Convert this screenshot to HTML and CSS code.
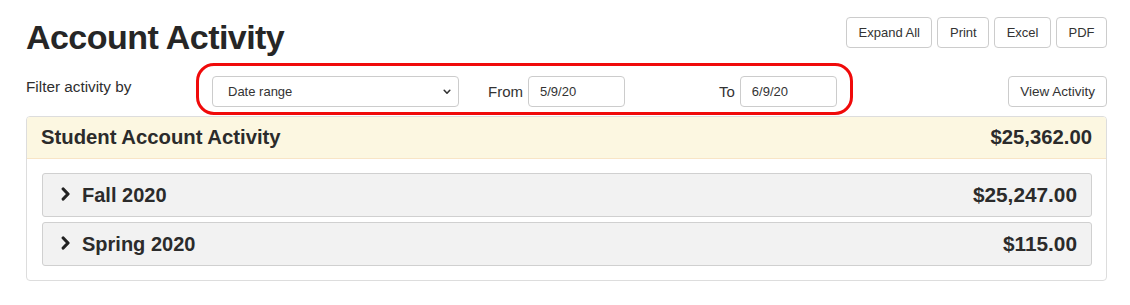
FILE: index.html
```html
<!DOCTYPE html>
<html>
<head>
<meta charset="utf-8">
<link rel="stylesheet" href="styles.css">
</head>
<body>
<div class="page">
  <div class="top">
    <h1 class="title">Account Activity</h1>
    <div class="actions">
      <button class="btn">Expand All</button>
      <button class="btn">Print</button>
      <button class="btn">Excel</button>
      <button class="btn">PDF</button>
    </div>
  </div>
  <div class="filter">
    <div class="filter-label">Filter activity by</div>
    <div class="highlight">
      <div class="select">
        <span>Date range</span>
        <svg width="8" height="6" viewBox="0 0 8 6"><path d="M1.2 1.3 L4 4.2 L6.8 1.3" fill="none" stroke="#333" stroke-width="1.6" stroke-linecap="round" stroke-linejoin="round"/></svg>
      </div>
      <label class="lbl lbl-from">From</label>
      <div class="input">5/9/20</div>
      <label class="lbl lbl-to">To</label>
      <div class="input">6/9/20</div>
    </div>
    <button class="btn btn-view">View Activity</button>
  </div>
  <div class="panel">
    <div class="panel-head">
      <span>Student Account Activity</span>
      <span>$25,362.00</span>
    </div>
    <div class="panel-body">
      <div class="term">
        <div class="term-name">
          <svg class="chev" width="10" height="14" viewBox="0 0 10 14"><path d="M2.2 2 L7 7 L2.2 12" fill="none" stroke="#222" stroke-width="3.2" stroke-linecap="round" stroke-linejoin="round"/></svg>
          <span>Fall 2020</span>
        </div>
        <span class="term-amt">$25,247.00</span>
      </div>
      <div class="term">
        <div class="term-name">
          <svg class="chev" width="10" height="14" viewBox="0 0 10 14"><path d="M2.2 2 L7 7 L2.2 12" fill="none" stroke="#222" stroke-width="3.2" stroke-linecap="round" stroke-linejoin="round"/></svg>
          <span>Spring 2020</span>
        </div>
        <span class="term-amt">$115.00</span>
      </div>
    </div>
  </div>
</div>
</body>
</html>
```

FILE: styles.css
```css
* { box-sizing: border-box; }
body {
  margin: 0;
  background: #fff;
  font-family: "Liberation Sans", Arial, sans-serif;
  color: #333;
}
.page {
  padding: 17px 23px 0 26px;
}
.top {
  display: flex;
  justify-content: space-between;
  align-items: flex-start;
}
.title {
  margin: 0;
  font-size: 34px;
  font-weight: bold;
  color: #262626;
  line-height: 40px;
  letter-spacing: -0.55px;
}
.actions {
  display: flex;
  gap: 5px;
}
.btn {
  height: 31px;
  padding: 0 11.5px;
  background: #fff;
  border: 1px solid #ccc;
  border-radius: 4px;
  font-family: "Liberation Sans", Arial, sans-serif;
  font-size: 13px;
  color: #333;
}
.filter {
  display: flex;
  align-items: flex-start;
  margin-top: 6px;
}
.filter-label {
  width: 170px;
  font-size: 15.3px;
  padding-top: 15px;
  color: #2e2e2e;
}
.highlight {
  display: flex;
  align-items: center;
  border: 3px solid #f00a0a;
  border-radius: 18px;
  padding: 10px 13px 5px 13px;
  height: 52px;
}
.select {
  width: 247px;
  height: 31px;
  border: 1px solid #ccc;
  border-radius: 4px;
  display: flex;
  align-items: center;
  justify-content: space-between;
  padding: 0 7px 0 15px;
  font-size: 13px;
  color: #333;
}
.lbl {
  font-size: 15px;
  color: #333;
  margin-right: 5px;
}
.lbl-from { margin-left: 29px; }
.lbl-to { margin-left: 94px; }
.input {
  width: 97px;
  height: 31px;
  border: 1px solid #ccc;
  border-radius: 4px;
  display: flex;
  align-items: center;
  padding: 0 11px;
  font-size: 13px;
  color: #333;
}
.btn-view {
  margin-left: auto;
  margin-top: 13px;
  padding: 0 11px;
  font-size: 13.5px;
}
.panel {
  margin-top: 1px;
  border: 1px solid #ddd;
  border-radius: 4px;
  overflow: hidden;
}
.panel-head {
  display: flex;
  justify-content: space-between;
  align-items: center;
  height: 42px;
  padding: 0 14px 0 14px;
  background: #fcf7e1;
  border-bottom: 1px solid #f8e5c6;
  font-size: 20.3px;
  font-weight: bold;
  color: #2b2b2b;
}
.panel-body {
  padding: 14px 14px 14px 15px;
  display: flex;
  flex-direction: column;
  gap: 5px;
}
.term {
  display: flex;
  justify-content: space-between;
  align-items: center;
  height: 44px;
  background: #f2f2f2;
  border: 1px solid #d0d0d0;
  border-radius: 3px;
  padding: 0 14px 0 18px;
  font-size: 20px;
  font-weight: bold;
  color: #2b2b2b;
}
.term-amt { font-size: 20.8px; }
.term-name {
  display: flex;
  align-items: center;
  gap: 11px;
}
.chev { display: block; margin-top: -3px; }
```
